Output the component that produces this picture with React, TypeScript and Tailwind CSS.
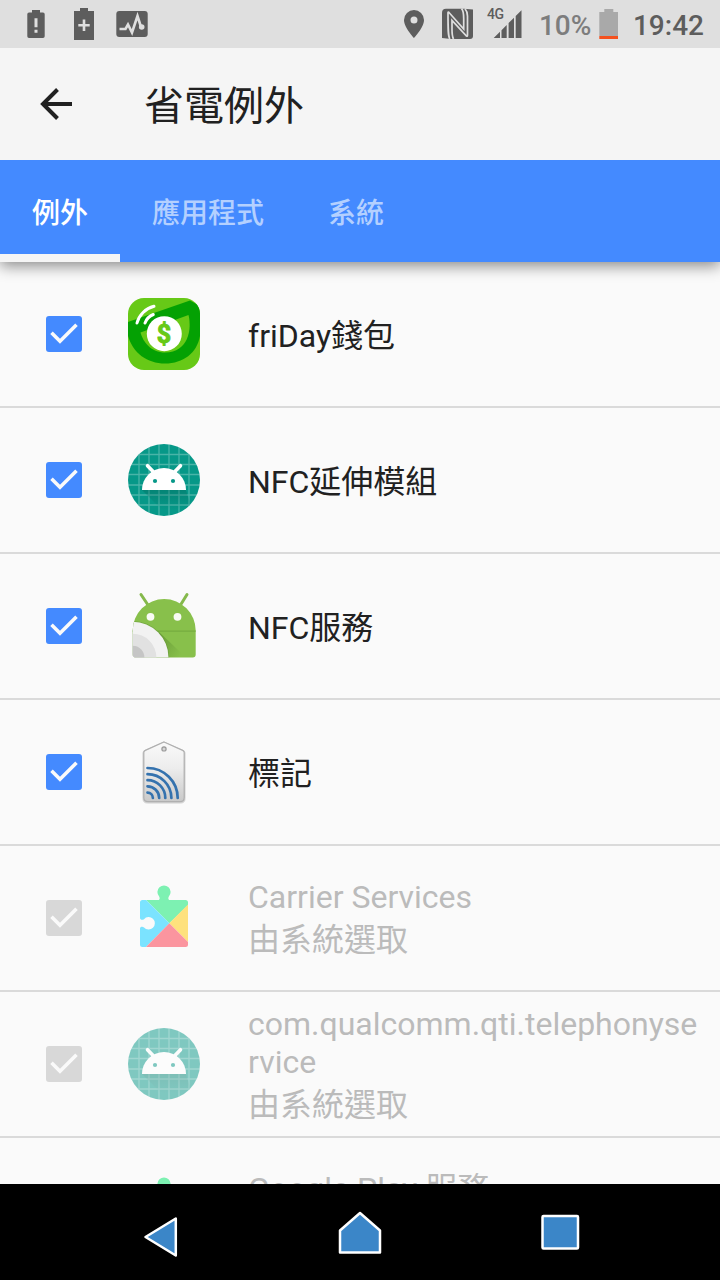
import { useState, type ReactNode } from "react";

interface AppEntry {
  id: string;
  name: string;
  icon: ReactNode;
  locked?: boolean;
}

function WalletIcon() {
  return (
    <svg viewBox="0 0 72 72" className="size-[72px]">
      <defs>
        <clipPath id="wallet-clip">
          <rect width="72" height="72" rx="16" />
        </clipPath>
      </defs>
      <g clipPath="url(#wallet-clip)">
        <rect width="72" height="72" fill="#67c917" />
        <path d="M0 24 62 2.5 72 8V38C69 55 55 65.500 37 65.500S5 55 0 38Z" fill="#04a103" />
        <path d="M12.500 34.500 60.500 17C64 31 60.500 54.500 37 54.500 23 54.500 15 44 12.500 34.500Z" fill="#67c917" />
        <circle cx="36.300" cy="35.700" r="17.500" fill="#fff" />
        <path d="M9 25C11 17 17.500 10.500 26 8.300M17 25C18.500 21 21.500 18 25.300 16.500" fill="none" stroke="#fff" strokeWidth="3" strokeLinecap="round" />
        <text x="36" y="45.200" textAnchor="middle" fontFamily="Roboto" fontWeight="700" fontSize="25" fill="#67c917" stroke="#67c917" strokeWidth="1" strokeLinejoin="round">$</text>
      </g>
    </svg>
  );
}

function DroidIcon({ faded = false }: { faded?: boolean }) {
  return (
    <svg viewBox="0 0 72 72" className={faded ? "size-[72px] opacity-50" : "size-[72px]"}>
      <defs>
        <clipPath id="droid-clip">
          <circle cx="36" cy="36" r="36" />
        </clipPath>
        <linearGradient id="droid-shadow" x1="0" y1="0" x2="0" y2="1">
          <stop offset="0" stopColor="#00574b" stopOpacity="0.3" />
          <stop offset="1" stopColor="#00574b" stopOpacity="0" />
        </linearGradient>
      </defs>
      <g clipPath="url(#droid-clip)">
        <rect width="72" height="72" fill="#069888" />
        <path d="M11 0V72M21 0V72M31 0V72M41 0V72M51 0V72M61 0V72M0 10.500H72M0 20.500H72M0 30.500H72M0 41H72M0 51H72M0 61H72" stroke="#fff" strokeOpacity="0.27" strokeWidth="1.300" />
        <path d="M14 46 34 66H64L58 46Z" fill="url(#droid-shadow)" />
      </g>
      <path d="M14 46A22 22 0 0 1 58 46Z" fill="#fff" />
      <path d="M19.500 21.700 26 28.500M52.500 21.700 46 28.500" stroke="#fff" strokeWidth="3.600" strokeLinecap="round" />
      <circle cx="27" cy="37" r="2.100" fill="#069888" />
      <circle cx="45" cy="37" r="2.100" fill="#069888" />
    </svg>
  );
}

function NfcServiceIcon() {
  return (
    <svg viewBox="0 0 72 72" className="size-[72px]">
      <defs>
        <clipPath id="nfc-clip">
          <path d="M4.700 40.500A31.500 31.500 0 0 1 67.700 40.500V64.500Q67.700 67.500 64.700 67.500H7.700Q4.700 67.500 4.700 64.500Z" />
        </clipPath>
        <linearGradient id="nfc-shadow" x1="0" y1="0" x2="1" y2="0.600">
          <stop offset="0.300" stopColor="#4d7d26" stopOpacity="0.400" />
          <stop offset="1" stopColor="#4d7d26" stopOpacity="0" />
        </linearGradient>
      </defs>
      <path d="M13 4.500 20 15M59 4.500 52.500 15" stroke="#85b94c" strokeWidth="3" strokeLinecap="round" />
      <g clipPath="url(#nfc-clip)">
        <rect width="72" height="72" fill="#88c04b" />
        <rect y="40.500" width="72" height="1.200" fill="#76ac3f" />
        <path d="M30 41 58 67.500H38Z" fill="url(#nfc-shadow)" />
        <circle cx="4.700" cy="67.500" r="36.500" fill="#5f8f35" fillOpacity="0.500" />
        <circle cx="4.700" cy="67.500" r="35.800" fill="#f2f2f2" />
        <circle cx="4.700" cy="67.500" r="23.700" fill="#e1e1e1" />
        <circle cx="4.700" cy="67.500" r="11.700" fill="#c5c5c5" />
      </g>
      <circle cx="22.500" cy="26.800" r="3.900" fill="#f8fbf4" />
      <circle cx="49.500" cy="26.800" r="3.900" fill="#f8fbf4" />
    </svg>
  );
}

function TagIcon() {
  return (
    <svg viewBox="0 0 72 72" className="size-[72px]">
      <defs>
        <linearGradient id="tag-fill" x1="0" y1="0" x2="0" y2="1">
          <stop offset="0" stopColor="#fafafa" />
          <stop offset="0.450" stopColor="#ececec" />
          <stop offset="1" stopColor="#c9c9c9" />
        </linearGradient>
      </defs>
      <path d="M36 6 55.500 14.700Q57 15.400 57 17V62.500Q57 67 52.500 67H19.500Q15 67 15 62.500V17Q15 15.400 16.500 14.700Z" fill="#d8d8d8" stroke="#cfcfcf" strokeWidth="1" />
      <path d="M36 6 54.700 14.400Q56.200 15.100 56.200 16.600V61.500Q56.200 65.700 52 65.700H20Q15.800 65.700 15.800 61.500V16.600Q15.800 15.100 17.300 14.400Z" fill="url(#tag-fill)" stroke="#b0b0b0" strokeWidth="1.200" />
      <circle cx="36" cy="12.900" r="2.100" fill="#d5d5d5" stroke="#999" strokeWidth="1.200" />
      <path d="M19.500 56.600A5.500 5.500 0 0 1 24.900 62M19.500 50.300A11.700 11.700 0 0 1 31.200 62M19.500 44.200A17.800 17.800 0 0 1 37.300 62M19.500 38.200A23.900 23.900 0 0 1 43.400 62M19.500 32A30.200 30.200 0 0 1 49.700 62" fill="none" stroke="#3472ae" strokeWidth="2.700" strokeLinecap="round" />
    </svg>
  );
}

function PlayServicesIcon() {
  return (
    <svg viewBox="0 0 72 72" className="size-[72px]">
      <defs>
        <clipPath id="play-clip">
          <path d="M14.500 18H30C32 18 32 15.500 31 14.300A6.600 6.600 0 1 1 41 14.300C40 15.500 40 18 42 18H57.500Q60 18 60 20.500V62.500Q60 65 57.500 65H14.500Q12 65 12 62.500V46.500C12 44.500 14.700 44.500 16 45.400A6.200 6.200 0 1 0 16 37.200C14.700 38.100 12 38 12 36V20.500Q12 18 14.500 18Z" />
        </clipPath>
      </defs>
      <g clipPath="url(#play-clip)">
        <path d="M10 0H62V21.300L41.300 41.300 18 18H10Z" fill="#7df1b2" />
        <path d="M10 18H18L41.300 41.300 18 65V67H10Z" fill="#7be3ff" />
        <path d="M60 22.600 62 20V62L60 60 41.300 41.300Z" fill="#fee17d" />
        <path d="M18 65 41.300 41.300 62 62V67H16Z" fill="#fb959f" />
      </g>
    </svg>
  );
}

const apps: AppEntry[] = [
  { id: "friday", name: "friDay錢包", icon: <WalletIcon /> },
  { id: "nfc-ext", name: "NFC延伸模組", icon: <DroidIcon /> },
  { id: "nfc", name: "NFC服務", icon: <NfcServiceIcon /> },
  { id: "tag", name: "標記", icon: <TagIcon /> },
  { id: "carrier", name: "Carrier Services", icon: <PlayServicesIcon />, locked: true },
  { id: "telephony", name: "com.qualcomm.qti.telephonyservice", icon: <DroidIcon faded />, locked: true },
  { id: "play", name: "Google Play 服務", icon: <PlayServicesIcon />, locked: true },
];

const tabs = ["例外", "應用程式", "系統"];

function StatusBar() {
  return (
    <div className="flex h-12 shrink-0 items-center bg-[#dfdfdf] text-[#5d5d5d]">
      <svg viewBox="0 0 18 28" className="ml-[27px] h-7 w-[18px]" fill="currentColor">
        <path d="M5 0H13V2.500H16Q17.700 2.500 17.700 4.200V26.300Q17.700 28 16 28H2Q.3 28 .3 26.300V4.200Q.3 2.500 2 2.500H5Z" />
        <path d="M7.500 8.300H10.500V17.300H7.500ZM7.500 19.700H10.500V22.700H7.500Z" fill="#dfdfdf" />
      </svg>
      <svg viewBox="0 0 20 32" className="ml-[29px] h-8 w-5" fill="currentColor">
        <path d="M6 0H14V3H20V32H0V3H6Z" />
        <path d="M4.300 17.300H15.700M10 11.500V23" stroke="#dfdfdf" strokeWidth="2.600" />
      </svg>
      <svg viewBox="0 0 32 26" className="ml-[22px] h-[26px] w-8">
        <rect x="0.300" width="31.400" height="26" rx="3" fill="currentColor" />
        <path d="M3.500 18H9.500L12 13.500 16 21.500 21.500 5 25 16" fill="none" stroke="#dfdfdf" strokeWidth="2.600" />
        <circle cx="25.700" cy="16" r="2.800" fill="#dfdfdf" />
      </svg>

      <svg viewBox="0 0 20 28" className="ml-auto h-7 w-5" fill="currentColor">
        <path fillRule="evenodd" d="M10 0A10 10 0 0 0 0 10C0 17.500 10 28 10 28S20 17.500 20 10A10 10 0 0 0 10 0ZM10 6.500A3.500 3.500 0 1 1 10 13.500 3.500 3.500 0 0 1 10 6.500Z" />
      </svg>
      <svg viewBox="0 0 32 32" className="ml-[18px] size-8">
        <path d="M4 .7H22L31 1.500V28Q31 31 28 31H9L0 30V4.700Q0 .7 4 .7Z" fill="currentColor" />
        <path d="M7.800 31C6 28 6 22 6 5Q6 3.700 6.800 4.300L21.700 21V10.500Q21.700 3 19.500 .7" fill="none" stroke="#dfdfdf" strokeWidth="1.700" />
        <path d="M11.500 31Q10 28 10 21.500V12.500L24.500 28Q25.500 28.600 25.500 27V8Q25.500 3.500 23 .7" fill="none" stroke="#dfdfdf" strokeWidth="1.700" />
      </svg>
      <div className="relative ml-[19px] h-7 w-[29px]">
        <span className="absolute -top-1 -left-[6px] text-[14px] leading-[16px] font-medium tracking-[-0.5px]">4G</span>
        <svg viewBox="0 0 29 28" className="h-7 w-[29px]" fill="currentColor">
          <path d="M.7 28 7 21.700V28ZM8.500 20.200 13.700 15V28H8.500ZM15.600 13.100 21 7.700V28H15.600ZM22.700 6 28.500 .2V28H22.700Z" />
        </svg>
      </div>
      <span className="mt-[3px] ml-[17px] w-[54px] text-[28px] leading-none font-medium text-[#7d7d7d]">10%</span>
      <svg viewBox="0 0 20 30" className="ml-[6px] h-[30px] w-5">
        <path d="M5.300 0H14.300V3H19V27H.3V3H5.300Z" fill="#a9a9a9" />
        <rect x="0.300" y="27" width="18.700" height="3" fill="#f4511e" />
      </svg>
      <span className="mt-[3px] mr-4 ml-[14px] text-[28px] leading-none font-medium">19:42</span>
    </div>
  );
}

function Checkbox({ checked, locked }: { checked: boolean; locked?: boolean }) {
  return (
    <span
      className={`flex size-9 shrink-0 rounded-[3px] ${locked ? "bg-[#d8d8d8]" : "bg-[#448aff]"}`}
    >
      {checked && (
        <svg viewBox="0 0 36 36" className="size-9">
          <path d="M5.500 16.800 14 25.300 30.500 8.800" fill="none" stroke="#fafafa" strokeWidth="3.600" />
        </svg>
      )}
    </span>
  );
}

export default function App() {
  const [activeTab, setActiveTab] = useState(0);
  const [unchecked, setUnchecked] = useState<string[]>([]);

  const toggle = (app: AppEntry) => {
    if (app.locked) return;
    setUnchecked(prev =>
      prev.includes(app.id) ? prev.filter(id => id !== app.id) : [...prev, app.id]
    );
  };

  return (
    <main className="flex h-[1280px] w-[720px] flex-col overflow-hidden bg-[#fafafa] font-[Roboto,'Noto_Sans_CJK_TC',sans-serif] text-[#212121]">
      <StatusBar />

      <header className="relative z-20 flex h-28 shrink-0 items-center bg-[#f5f5f5]">
        <svg viewBox="0 0 32 32" className="ml-10 size-8" fill="none" stroke="#212121" strokeWidth="4">
          <path d="M32 16H3M17.500 1.500 3 16 17.500 30.500" />
        </svg>
        <h1 className="mt-[5px] ml-[72px] text-[40px] leading-none">省電例外</h1>
      </header>

      <nav className="relative z-10 flex h-[102px] shrink-0 bg-[#448aff] shadow-[0_4px_14px_rgba(0,0,0,0.45)]">
        {tabs.map((tab, i) => (
          <button
            key={tab}
            onClick={() => setActiveTab(i)}
            className={`border-b-8 px-8 pt-[13px] text-[28px] leading-none font-medium ${
              i === activeTab ? "border-[#f5f5f5] text-white" : "border-transparent text-[#b4d0ff]"
            }`}
          >
            {tab}
          </button>
        ))}
      </nav>

      <ul className="min-h-0 flex-1 overflow-hidden">
        {apps.map(app => (
          <li
            key={app.id}
            onClick={() => toggle(app)}
            className="flex h-[146px] items-center border-b-2 border-[#dadada] pl-[46px]"
          >
            <Checkbox checked={!unchecked.includes(app.id)} locked={app.locked} />
            <div className="ml-[46px] shrink-0">{app.icon}</div>
            <div className={`ml-12 w-[456px] text-[32px] leading-[38px] break-all ${app.locked ? "pt-[7px] text-[#bbbbbb]" : "pt-[3px]"}`}>
              <p>{app.name}</p>
              {app.locked && <p className="leading-[49px]">由系統選取</p>}
            </div>
          </li>
        ))}
      </ul>

      <footer className="grid h-24 shrink-0 grid-cols-3 place-items-center bg-black px-[60px]">
        <svg viewBox="0 0 56 56" className="size-14" fill="#3b86c8" stroke="#fff" strokeWidth="2.500" strokeLinejoin="round">
          <path d="M13.500 33 43.800 14.500V51.500Z" />
        </svg>
        <svg viewBox="0 0 56 56" className="size-14" fill="#3b86c8" stroke="#fff" strokeWidth="2.500" strokeLinejoin="round">
          <path d="M28 9 48 26.500V48.500H8V26.500Z" />
        </svg>
        <svg viewBox="0 0 56 56" className="size-14" fill="#3b86c8" stroke="#fff" strokeWidth="2.500" strokeLinejoin="round">
          <rect x="10.500" y="12" width="35.500" height="32.500" rx="1" />
        </svg>
      </footer>
    </main>
  );
}
